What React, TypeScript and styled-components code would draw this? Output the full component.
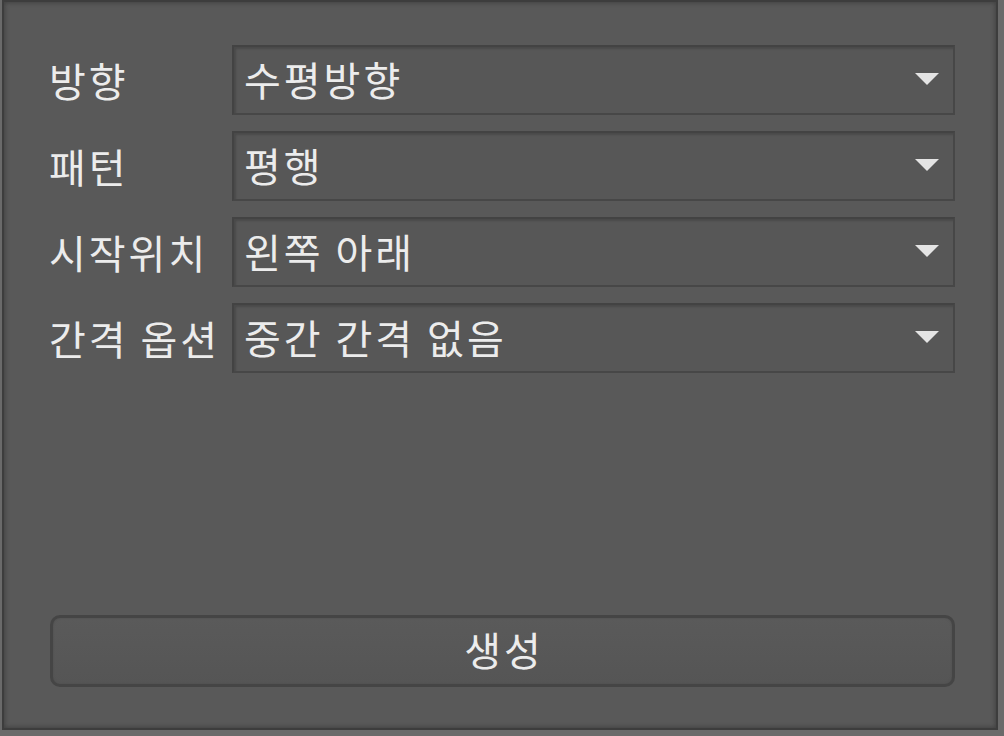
import styled, { createGlobalStyle } from "styled-components";

const GlobalStyle = createGlobalStyle`
    html, body {
        margin: 0;
        padding: 0;
        background: #6a6a6a;
    }
    * {
        box-sizing: border-box;
    }
`;

const fields = [
    { label: "방향", value: "수평방향" },
    { label: "패턴", value: "평행" },
    { label: "시작위치", value: "왼쪽 아래" },
    { label: "간격 옵션", value: "중간 간격 없음" },
];

export default function App() {
    return (
        <>
            <GlobalStyle />
            <Window>
                <Panel>
                    <Form>
                        {fields.map((f) => (
                            <Row key={f.label}>
                                <Label>{f.label}</Label>
                                <Combo>
                                    <span>{f.value}</span>
                                    <svg width="24" height="13" viewBox="0 0 24 13">
                                        <polygon points="0,0 24,0 12,12" fill="#e4e4e4" />
                                    </svg>
                                </Combo>
                            </Row>
                        ))}
                    </Form>
                    <CreateButton>생성</CreateButton>
                </Panel>
            </Window>
        </>
    );
}

const Window = styled.div`
    width: 1004px;
    height: 736px;
    padding: 0 6px 6px 2px;
    font-family: "Noto Sans CJK KR", "Noto Sans", sans-serif;
`;

const Panel = styled.div`
    height: 100%;
    background: #595959;
    border: 2px solid #3d3d3d;
    box-shadow: inset 0 0 4px 1px #424242;
    padding: 43px 41px 41px 46px;
    display: flex;
    flex-direction: column;
`;

const Form = styled.div`
    display: flex;
    flex-direction: column;
    gap: 16px;
`;

const Row = styled.div`
    display: grid;
    grid-template-columns: 182px 1fr;
    align-items: center;
`;

const Label = styled.span`
    font-size: 40px;
    color: #ececec;
    white-space: nowrap;
    line-height: 1;
    letter-spacing: 3px;
    margin-left: -1px;
`;

const Combo = styled.div`
    height: 70px;
    background: #575757;
    border: 2px solid #474747;
    border-top-color: #434343;
    border-left-color: #434343;
    box-shadow: inset 2px 2px 2px #4a4a4a;
    display: flex;
    align-items: center;
    justify-content: space-between;
    padding: 0 14px 2px 10px;

    span {
        font-size: 40px;
        color: #ececec;
        line-height: 1;
        letter-spacing: 3px;
    }
`;

const CreateButton = styled.button`
    margin-top: auto;
    height: 72px;
    width: 100%;
    border: 3px solid #454545;
    border-radius: 10px;
    background: linear-gradient(#5a5a5a, #555555);
    box-shadow: inset 0 0 2px #4c4c4c;
    color: #ececec;
    font-family: inherit;
    font-size: 40px;
    line-height: 1;
    letter-spacing: 3px;
    padding: 0 0 4px 3px;
`;
